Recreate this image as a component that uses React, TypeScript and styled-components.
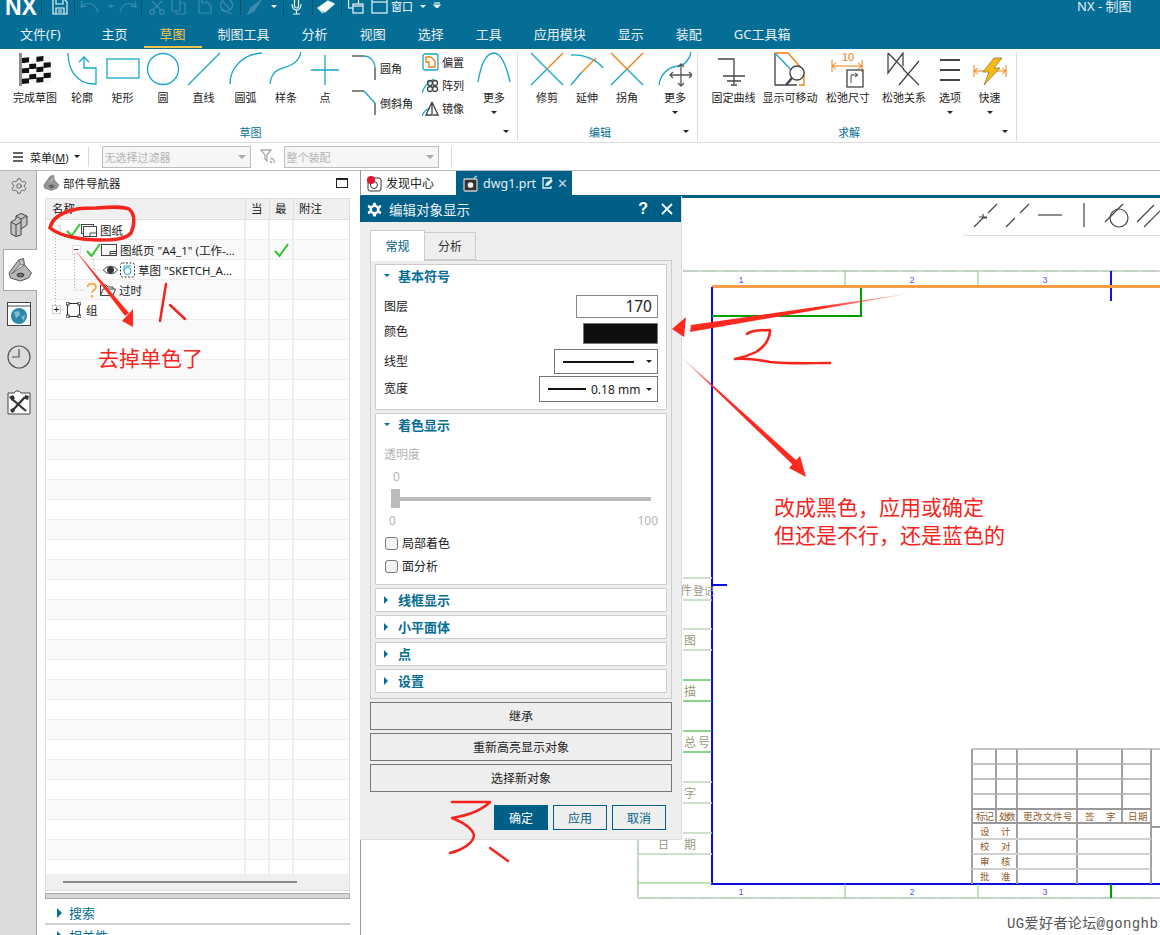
import React from "react";
import styled, { createGlobalStyle } from "styled-components";
import { Settings } from "lucide-react";

const FONT = `"Noto Sans", "Noto Sans CJK SC", sans-serif`;
const CY = "#16a6c9";
const OR = "#ee7d11";
const DK = "#444";

const Global = createGlobalStyle`
  html, body { margin: 0; padding: 0; background: #fff; }
  * { box-sizing: border-box; }
`;

const Root = styled.div`
  position: relative; width: 1160px; height: 935px; overflow: hidden;
  display: flex; flex-direction: column; font-family: ${FONT}; font-size: 12px; color: #222;
`;

/* ---------- header ---------- */
const Header = styled.header`
  height: 49px; background: #056e96; color: #eaf3f7; display: flex; flex-direction: column; flex: none;
`;
const QuickBar = styled.div`
  height: 22px; display: flex; align-items: flex-start; overflow: hidden; position: relative;
`;
const Logo = styled.div`
  font: bold 23px/15px "Liberation Sans", sans-serif; color: #fff; margin-left: 5px; width: 31px; height: 15px; letter-spacing: -0.2px;
`;
const QuickSep = styled.i<{ $ml: number }>`
  display: block; width: 1px; height: 15px; background: #03506f; margin-left: ${p => p.$ml}px; flex: none;
`;
const QuickIcon = styled.svg<{ $ml: number }>`
  display: block; flex: none; margin-left: ${p => p.$ml}px; fill: none; stroke: currentColor; stroke-width: 1.2;
`;
const QuickText = styled.span`
  font-size: 11px; line-height: 13px; margin-left: 2px; color: #fff;
`;
const Caret = styled.i<{ $dir?: "down" | "right"; $size?: number; $color?: string; $ml?: number }>`
  display: inline-block; flex: none; width: 0; height: 0; margin-left: ${p => p.$ml ?? 0}px;
  ${p => {
    const s = p.$size ?? 3; const c = p.$color ?? "#222";
    return p.$dir === "right"
      ? `border-top: ${s + 1}px solid transparent; border-bottom: ${s + 1}px solid transparent; border-left: ${s + 1}px solid ${c};`
      : `border-left: ${s}px solid transparent; border-right: ${s}px solid transparent; border-top: ${s}px solid ${c};`;
  }}
`;
const QuickCaret = styled(Caret)`margin-top: 5px;`;
const AppTitle = styled.div`
  position: absolute; left: 1077px; top: -2px; font-size: 13px; line-height: 16px; color: #e6f0f4; white-space: nowrap;
`;
const TabRow = styled.nav`
  height: 27px; display: flex; padding-left: 4px;
`;
const RibbonTab = styled.div<{ $active?: boolean; $ml?: number }>`
  padding: 0 16px; height: 26px; margin-left: ${p => p.$ml ?? 0}px; line-height: 24px; font-size: 13px;
  color: ${p => (p.$active ? "#f3c34f" : "#e8f1f5")};
  border-bottom: 2px solid ${p => (p.$active ? "#f3c34f" : "transparent")};
  white-space: nowrap;
`;

/* ---------- ribbon ---------- */
const Ribbon = styled.section`
  height: 94px; flex: none; display: flex; background: #fff; border-bottom: 1px solid #dcdcdc;
`;
const Group = styled.div<{ $w: number; $pl: number }>`
  width: ${p => p.$w}px; padding-left: ${p => p.$pl}px; height: 89px; margin-top: 3px; display: flex; flex-direction: column;
  border-right: 1px solid #dcdcdc;
`;
const Tools = styled.div`
  height: 71px; display: flex;
`;
const Tool = styled.div<{ $w: number; $ml?: number }>`
  width: ${p => p.$w}px; margin-left: ${p => p.$ml ?? 0}px; display: flex; flex-direction: column; align-items: center; flex: none;
`;
const ToolIcon = styled.svg`
  display: block; width: 34px; height: 36px; fill: none; stroke-width: 1.3; flex: none;
`;
const ToolLabel = styled.span`
  font-size: 11px; line-height: 14px; margin-top: 3px; white-space: nowrap; color: #222;
`;
const ToolCaret = styled(Caret)`margin-top: 6px;`;
const GroupFoot = styled.div`
  height: 17px; display: flex; align-items: center; padding-right: 8px;
`;
const GroupLabel = styled.span`
  flex: 1; text-align: center; font-size: 11px; color: #056e96; padding-right: 10px;
`;
const SmallCol = styled.div<{ $w: number; $gap: number; $pt: number; $ml?: number }>`
  width: ${p => p.$w}px; flex: none; display: flex; flex-direction: column; gap: ${p => p.$gap}px; padding-top: ${p => p.$pt}px; margin-left: ${p => p.$ml ?? 0}px;
`;
const SmallTool = styled.div`
  display: flex; align-items: center; white-space: nowrap; font-size: 11px; gap: 3px;
`;
const SmallIcon = styled.svg<{ $w: number; $h: number; $ml?: number }>`
  display: block; width: ${p => p.$w}px; height: ${p => p.$h}px; margin-left: ${p => p.$ml ?? 0}px; fill: none; stroke-width: 1.3; flex: none;
`;

/* ---------- selection bar ---------- */
const SelectBar = styled.div`
  height: 27px; flex: none; display: flex; align-items: center; background: #fff; padding-left: 13px;
`;
const MenuLabel = styled.span`
  font-size: 11px; margin-left: 7px; white-space: nowrap;
  u { text-underline-offset: 1px; }
`;
const BarSep = styled.i<{ $ml: number }>`
  width: 1px; height: 20px; background: #d8d8d8; margin-left: ${p => p.$ml}px; flex: none;
`;
const FilterBox = styled.div<{ $w: number; $ml: number }>`
  width: ${p => p.$w}px; margin-left: ${p => p.$ml}px; height: 22px; border: 1px solid #bdbdbd; background: #f6f6f6;
  color: #b4b4b4; font-size: 11px; display: flex; align-items: center; justify-content: space-between; padding: 0 4px 0 2px; flex: none;
`;

/* ---------- main ---------- */
const Main = styled.div`
  flex: 1; min-height: 0; display: flex;
`;
const Rail = styled.aside`
  width: 37px; flex: none; background: #dcdcdc; border-right: 1px solid #a8a8a8; border-top: 1px solid #bbb; display: flex; flex-direction: column;
`;
const RailItem = styled.div<{ $h: number; $active?: boolean }>`
  height: ${p => p.$h}px; display: flex; align-items: center; justify-content: center; padding-left: 2px; color: #555;
  ${p => p.$active ? "background: #fff; margin-left: 3px; margin-right: -1px; padding-left: 0; border: 1px solid #a8a8a8; border-right: none;" : ""}
`;
const Nav = styled.section`
  width: 323px; flex: none; background: #fff; border-top: 1px solid #bbb; display: flex; flex-direction: column; padding-left: 8px; padding-right: 10px;
`;
const NavTitle = styled.div`
  height: 27px; flex: none; display: flex; align-items: center; margin-left: -2px; padding-bottom: 4px; font-size: 11.5px; position: relative;
`;
const NavName = styled.span`margin-left: 3px; flex: 1;`;
const MaxBox = styled.i`
  display: block; width: 12px; height: 10px; border: 1px solid #222; border-top-width: 2px; margin-right: 2px;
`;
const Table = styled.div`
  height: 693px; flex: none; border: 1px solid #dedede; border-left-width: 1px; display: flex; flex-direction: column; overflow: hidden;
`;
const Cols = styled.div<{ $alt?: boolean }>`
  display: grid; grid-template-columns: 200px 24px 24px 1fr; flex: none;
  background: ${p => (p.$alt ? "#f9f9f9" : "#fff")};
`;
const HeadRow = styled(Cols)`
  height: 21px; background: #f0f0f0; border-bottom: 1px solid #dedede;
`;
const HeadCell = styled.div<{ $pl: number }>`
  border-right: 1px solid #dedede; padding-left: ${p => p.$pl}px; line-height: 20px; font-size: 11.5px; white-space: nowrap;
  &:last-child { border-right: none; }
`;
const TreeBody = styled.div`
  position: relative; height: 654px; overflow: hidden; flex: none;
`;
const TreeLines = styled.svg`
  position: absolute; left: 0; top: 0; width: 200px; height: 100px; fill: none; stroke: #aaa; stroke-width: 1; stroke-dasharray: 1 2;
`;
const Row = styled(Cols)`
  height: 20px; border-bottom: 1px solid #eee;
`;
const Cell = styled.div`
  border-right: 2px solid #eee; display: flex; align-items: center; justify-content: center;
  &:last-child { border-right: none; }
`;
const NameCell = styled.div<{ $pl?: number }>`
  border-right: 2px solid #eee; display: flex; align-items: center; padding-left: ${p => p.$pl ?? 0}px; white-space: nowrap; overflow: hidden; position: relative;
`;
const Exp = styled.i<{ $faint?: boolean }>`
  display: flex; align-items: center; justify-content: center; width: 9px; height: 9px; border: 1px solid ${p => p.$faint ? "#e2e2e2" : "#ccc"};
  font: normal 10px/7px "Liberation Sans", sans-serif; color: #111; background: #fff; flex: none; z-index: 1;
`;
const NodeIcon = styled.svg<{ $w: number; $ml?: number }>`
  display: block; width: ${p => p.$w}px; height: 16px; margin-left: ${p => p.$ml ?? 0}px; flex: none; fill: none; stroke: #333; stroke-width: 1;
`;
const NodeText = styled.span<{ $ml: number }>`
  margin-left: ${p => p.$ml}px; font-size: 11.5px; color: #222;
`;
const ScrollRow = styled.div`
  flex: 1; background: #efefef; display: flex; align-items: center; padding-left: 17px;
`;
const Thumb = styled.i`
  display: block; width: 234px; height: 2px; background: #888;
`;
const Splitter = styled.div`
  height: 6px; flex: none; margin-top: 2px; background: #d6d6d6; border: 1px solid #aaa;
`;
const Fold = styled.div<{ $h: number; $pt: number }>`
  height: ${p => p.$h}px; flex: none; display: flex; align-items: center; padding: ${p => p.$pt}px 0 0 12px; color: #056e96; font-size: 13px; gap: 7px;
  border-bottom: 2px solid #cfcfcf;
`;

/* ---------- graphics ---------- */
const Graphics = styled.section`
  flex: 1; min-width: 0; position: relative; border-left: 1px solid #999; display: flex; flex-direction: column;
`;
const DocTabs = styled.div`
  height: 25px; flex: none; display: flex; border-top: 1px solid #bbb; background: #fff;
`;
const DocTab = styled.div<{ $w: number; $active?: boolean }>`
  width: ${p => p.$w}px; display: flex; align-items: center; padding-left: 5px; gap: 4px; font-size: 12px;
  background: ${p => (p.$active ? "#005f87" : "#fff")}; color: ${p => (p.$active ? "#e8f0f4" : "#222")};
`;
const DocName = styled.span`font-size: 12.5px; margin-right: 2px;`;
const DocClose = styled.span`font-size: 13px; line-height: 14px; color: #c9d9e2;`;
const Canvas = styled.div`
  flex: 1; position: relative; background: #fff; border-top: 3px solid #005f87; overflow: hidden;
`;
const Sheet = styled.svg`
  position: absolute; left: 0; top: -3px; width: 800px; height: 740px; display: block;
`;
const ViewTools = styled.div`
  position: absolute; right: 0; top: 0; width: 197px; height: 38px; background: #fff; border-bottom: 1px solid #dcdcdc;
  display: flex; align-items: center; padding-left: 10px; gap: 7px;
`;
const ViewIcon = styled.svg<{ $ml?: number }>`
  display: block; width: 25px; height: 26px; fill: none; stroke: #444; stroke-width: 1.2; flex: none; margin: -4px 0 0 ${p => p.$ml ?? 0}px;
`;

/* ---------- dialog ---------- */
const Dialog = styled.div`
  position: absolute; left: -1px; top: 26px; width: 322px; height: 644px; background: #eee; border-bottom: 1px solid #ddd; border-right: 1px solid #ddd;
  display: flex; flex-direction: column; z-index: 2;
`;
const DlgTitle = styled.div`
  height: 26px; flex: none; background: #005f87; color: #eef4f7; display: flex; align-items: center; padding-left: 7px; font-size: 13.5px;
`;
const DlgName = styled.span`margin-left: 7px; flex: 1;`;
const DlgBtn = styled.span<{ $mr: number }>`
  font: bold 16px/20px "Liberation Sans", sans-serif; margin-right: ${p => p.$mr}px; color: #fff;
`;
const DlgClose = styled.svg`
  width: 12px; height: 12px; stroke: #fff; stroke-width: 1.8; margin-right: 8px; flex: none;
`;
const DlgTabs = styled.div`
  display: flex; align-items: flex-end; height: 30px; margin: 8px 0 0 10px; flex: none;
`;
const DlgTab = styled.div<{ $active?: boolean; $w: number }>`
  width: ${p => p.$w}px; height: ${p => (p.$active ? 31 : 28)}px; border: 1px solid #ccc; ${p => p.$active ? "border-bottom: none; color: #005f87; background: #fff; margin-bottom: -1px; z-index: 1;" : "color: #333; border-left: none;"}
  font-size: 12px; display: flex; align-items: center; justify-content: center;
`;
const TabPanel = styled.div`
  margin: 0 0 0 10px; width: 302px; height: 439px; border: 1px solid #ccc; background: #eee; padding: 3px 4px; display: flex; flex-direction: column; gap: 3px; flex: none;
`;
const Section = styled.div<{ $h: number }>`
  height: ${p => p.$h}px; flex: none; background: #fff; border: 1px solid #ccc; border-radius: 1px; display: flex; flex-direction: column; padding: 0 8px;
`;
const SecHead = styled.div`
  height: 23px; padding-bottom: 2px; flex: none; display: flex; align-items: center; font-size: 13px; font-weight: 700; color: #056e96;
`;
const SecCaret = styled.span`
  width: 14px; flex: none; display: flex; align-items: center;
`;
const Field = styled.div<{ $h: number; $mt: number }>`
  height: ${p => p.$h}px; margin-top: ${p => p.$mt}px; flex: none; display: flex; align-items: center; justify-content: space-between;
`;
const FieldLabel = styled.span<{ $up?: number }>`
  font-size: 12px; padding-bottom: ${p => p.$up ?? 2}px;
`;
const NumInput = styled.div`
  width: 82px; height: 23px; border: 1px solid #888; background: #fff; text-align: right; padding-right: 5px; font-size: 15.5px; line-height: 21px; color: #222;
`;
const Swatch = styled.div`
  width: 75px; height: 21px; background: #0e0e0e; border: 1px solid #777;
`;
const Combo = styled.div<{ $w: number; $h: number }>`
  width: ${p => p.$w}px; height: ${p => p.$h}px; border: 1px solid #777; background: #fff; display: flex; align-items: center; padding: 0 5px 0 5px; font-size: 12px; gap: 5px; white-space: nowrap;
`;
const LineSample = styled.i<{ $w: number }>`
  display: block; width: ${p => p.$w}px; height: 2px; background: #111; flex: none; margin-left: 3px;
`;
const ComboCaret = styled(Caret)`margin-left: auto;`;
const Muted = styled.div<{ $mt: number; $pl?: number }>`
  margin-top: ${p => p.$mt}px; padding-left: ${p => p.$pl ?? 0}px; height: 15px; line-height: 15px; font-size: 12px; color: #b5b5b5; flex: none;
`;
const Slider = styled.div`
  margin: 5px 0 0 7px; height: 19px; display: flex; align-items: center; flex: none;
`;
const SliderThumb = styled.i`display: block; width: 9px; height: 19px; background: #bbb; flex: none;`;
const SliderTrack = styled.i`display: block; width: 251px; height: 4px; background: #bbb; flex: none;`;
const Ends = styled.div`
  margin-top: 6px; height: 14px; line-height: 14px; display: flex; justify-content: space-between; color: #b5b5b5; font-size: 12px; padding-left: 5px; flex: none;
`;
const Check = styled.div<{ $mt: number }>`
  margin-top: ${p => p.$mt}px; height: 18px; padding-left: 1px; display: flex; align-items: center; gap: 4px; font-size: 12px; flex: none;
`;
const CheckBox = styled.i`
  display: block; width: 13px; height: 13px; border: 1px solid #777; border-radius: 3px; background: #f4f4f4;
`;
const WideBtn = styled.div`
  margin: 3px 0 0 10px; width: 302px; height: 28px; flex: none; border: 1px solid #777; background: #eee; display: flex; align-items: center; justify-content: center; font-size: 12px; color: #222;
`;
const DlgFoot = styled.div`
  margin-top: 13px; padding-right: 15px; display: flex; justify-content: flex-end; gap: 5px; flex: none;
`;
const FootBtn = styled.div<{ $primary?: boolean }>`
  width: 54px; height: 25px; border: 1px solid #005f87; display: flex; align-items: center; justify-content: center; font-size: 12px;
  background: ${p => (p.$primary ? "#005f87" : "#eee")}; color: ${p => (p.$primary ? "#fff" : "#005f87")};
`;

/* ---------- annotations ---------- */
const Overlay = styled.svg`
  position: absolute; left: 0; top: 0; width: 1160px; height: 935px; pointer-events: none; z-index: 5;
`;
const Note = styled.div<{ $x: number; $y: number; $size: number }>`
  position: absolute; left: ${p => p.$x}px; top: ${p => p.$y}px; font-size: ${p => p.$size}px; line-height: 28px; color: #f5241c; white-space: nowrap; z-index: 6;
`;

/* ---------- icons ---------- */
const Flag = () => (
  <ToolIcon viewBox="0 0 34 36">
    <rect x="1" y="1" width="3" height="33" fill="#8d8d8d" />
    <g transform="translate(4 4) skewY(-5)">
      {[0, 1, 2, 3, 4].map(r => [0, 1, 2, 3].map(c => (
        <rect key={`${r}-${c}`} x={c * 7.2} y={r * 5.2 + (c % 2 ? 1.5 : 0) + 2} width="7.2" height="5.2" fill={(r + c) % 2 ? "#f7f7f7" : "#111"} />
      )))}
    </g>
  </ToolIcon>
);
const Stroke = ({ d, c = CY, w = 1.3 }: { d: string; c?: string; w?: number }) => <path d={d} stroke={c} strokeWidth={w} fill="none" />;

const Mini = ({ children, w, h }: { children: React.ReactNode; w: number; h: number }) => (
  <SmallIcon $w={w} $h={h} viewBox={`0 0 ${w} ${h}`}>{children}</SmallIcon>
);

const tool = (children: React.ReactNode) => <ToolIcon viewBox="0 0 34 36">{children}</ToolIcon>;

const CheckMark = ({ ml = 0 }: { ml?: number }) => (
  <NodeIcon $w={15} $ml={ml} viewBox="0 0 15 16"><path d="M1 9 L5.5 14 L14 2" stroke="#2fc42f" strokeWidth="2" /></NodeIcon>
);
const SheetIcon = ({ ml = 0 }: { ml?: number }) => (
  <NodeIcon $w={16} viewBox="0 0 16 16" $ml={ml}><rect x="0.5" y="2.5" width="15" height="11" stroke="#444" /><path d="M9 13.5 V9.5 H15.5 M9 11.5 H15.5" stroke="#444" /></NodeIcon>
);
const PartIcon = ({ w, h, face, edge }: { w: number; h: number; face: string; edge: string }) => (
  <svg width={w} height={h} viewBox="0 0 24 24">
    <path d="M0.500 15 L10 2 L15 0.500 L16 7 L23 15 L20 20 L12 23 L2 20 Z" fill={face} stroke={edge} />
    <path d="M10 2 L12 6 L16 7 M12 6 L3 16 L7 13 L16 7" fill="#dcdcdc" stroke={edge} strokeWidth="0.8" />
    <ellipse cx="12" cy="17" rx="3.500" ry="1.800" fill="#777" stroke="#333" />
  </svg>
);

const names = ["文件(F)"];
const tabs = ["制图工具", "分析", "视图", "选择", "工具", "应用模块", "显示", "装配", "GC工具箱"];

const hy = [749, 764, 779, 794];
const lowY = [839, 854, 869];

export default function App() {
  return (
    <Root>
      <Global />
      <Header>
        <QuickBar>
          <Logo>NX</Logo>
          <QuickSep $ml={5} />
          <QuickIcon $ml={10} width="16" height="15" viewBox="0 0 16 15"><path d="M1 -1 H12 L15 2 V14 H1 Z M4 -1 V4 H11 V-1 M4 14 V8 H12 V14 M6 10 H10 M6 12 H10" /></QuickIcon>
          <QuickSep $ml={6} />
          <QuickIcon $ml={5} width="19" height="15" viewBox="0 0 19 15" color="#3b8cad"><path d="M2 1 L1 7 L7 6 M1 7 C6 1 15 2 18 12" /></QuickIcon>
          <QuickCaret $ml={9} $color="#3b8cad" />
          <QuickIcon $ml={5} width="18" height="15" viewBox="0 0 19 15" color="#3b8cad"><path d="M17 1 L18 7 L12 6 M18 7 C13 1 4 2 1 12" /></QuickIcon>
          <QuickSep $ml={4} />
          <QuickIcon $ml={6} width="18" height="15" viewBox="0 0 18 15" color="#3b8cad"><path d="M4 1 L13 10 M14 1 L5 10" /><circle cx="4" cy="12" r="2.3" /><circle cx="14" cy="12" r="2.3" /></QuickIcon>
          <QuickIcon $ml={5} width="15" height="15" viewBox="0 0 15 15" color="#3b8cad"><path d="M1 -1 H9 V11 H1 Z M9 3 H14 V14 H5 V11" /></QuickIcon>
          <QuickIcon $ml={12} width="14" height="15" viewBox="0 0 14 15" color="#3b8cad"><path d="M1 0 V13 H13 V6 L8 1 M4 0 V3 H8" /></QuickIcon>
          <QuickIcon $ml={7} width="15" height="15" viewBox="0 0 15 15" color="#3b8cad"><circle cx="7.5" cy="5" r="6" /><path d="M2 10 L13 14 M4 2 L11 9" /></QuickIcon>
          <QuickSep $ml={6} />
          <QuickIcon $ml={6} width="17" height="15" viewBox="0 0 17 15" color="#3b8cad"><path d="M1 14 L4 8 L14 0 L7 11 Z" fill="#3b8cad" /></QuickIcon>
          <QuickCaret $ml={7} $color="#fff" />
          <QuickSep $ml={6} />
          <QuickIcon $ml={7} width="11" height="15" viewBox="0 0 11 15"><rect x="3.5" y="-2" width="4" height="10" rx="2" /><path d="M1 4 C1 12 10 12 10 4 M5.5 10 V14 M2 14 H9" /></QuickIcon>
          <QuickSep $ml={10} />
          <QuickIcon $ml={4} width="18" height="15" viewBox="0 0 18 15"><path d="M1 8 L11 1 L17 4 L8 12 Z" fill="#fff" /><path d="M1 8 L6 13" /></QuickIcon>
          <QuickSep $ml={6} />
          <QuickIcon $ml={6} width="16" height="15" viewBox="0 0 16 15"><rect x="0.5" y="-1" width="10" height="9" /><rect x="5" y="4" width="10" height="9" fill="#056e96" /><path d="M5 6 H15" /></QuickIcon>
          <QuickIcon $ml={7} width="18" height="15" viewBox="0 0 18 15"><rect x="1" y="-2" width="15" height="15" /><path d="M1 2 H16" /></QuickIcon>
          <QuickText>窗口</QuickText>
          <QuickCaret $ml={7} $color="#fff" />
          <QuickIcon $ml={7} width="8" height="8" viewBox="0 0 8 8"><path d="M1 3 H7" /><path d="M1 5 H7 L4 8 Z" fill="#fff" /></QuickIcon>
          <AppTitle>NX - 制图</AppTitle>
        </QuickBar>
        <TabRow>
          <RibbonTab>{names[0]}</RibbonTab>
          <RibbonTab $ml={9}>主页</RibbonTab>
          <RibbonTab $active>草图</RibbonTab>
          {tabs.map(t => <RibbonTab key={t}>{t}</RibbonTab>)}
        </TabRow>
      </Header>

      <Ribbon>
        <Group $w={518} $pl={8}>
          <Tools>
            <Tool $w={54}><Flag /><ToolLabel>完成草图</ToolLabel></Tool>
            <Tool $w={40}>{tool(<><Stroke d="M3 1 C3 18 12 32 29 32 H31 V16 H19 V5" /><Stroke d="M14 10 L19 5 L24 10" /></>)}<ToolLabel>轮廓</ToolLabel></Tool>
            <Tool $w={41}>{tool(<rect x="1" y="7" width="32" height="19" stroke={CY} />)}<ToolLabel>矩形</ToolLabel></Tool>
            <Tool $w={40}>{tool(<circle cx="17" cy="17" r="15.5" stroke={CY} />)}<ToolLabel>圆</ToolLabel></Tool>
            <Tool $w={41}>{tool(<Stroke d="M1 33 L33 1" />)}<ToolLabel>直线</ToolLabel></Tool>
            <Tool $w={43}>{tool(<Stroke d="M1 32 C1 15 15 2 33 1" />)}<ToolLabel>圆弧</ToolLabel></Tool>
            <Tool $w={38}>{tool(<Stroke d="M1 32 C3 15 15 17 22 13 C28 10 31 6 32 0" />)}<ToolLabel>样条</ToolLabel></Tool>
            <Tool $w={40}>{tool(<Stroke d="M17 3 V33 M3 18 H31" />)}<ToolLabel>点</ToolLabel></Tool>
            <SmallCol $w={70} $gap={9} $pt={3} $ml={7}>
              <SmallTool><Mini w={25} h={26}><Stroke d="M0 1 H12" c={DK} /><Stroke d="M12 1 C18 1 23 6 23 13" /><Stroke d="M23 13 V25" c={DK} /></Mini>圆角</SmallTool>
              <SmallTool><Mini w={25} h={26}><Stroke d="M0 1 H12" c={DK} /><Stroke d="M12 1 L23 13" /><Stroke d="M23 13 V25" c={DK} /></Mini>倒斜角</SmallTool>
            </SmallCol>
            <SmallCol $w={53} $gap={5} $pt={1}>
              <SmallTool>
                <Mini w={17} h={18}><rect x="1" y="1" width="15" height="16" rx="2" stroke={CY} /><Stroke d="M4 4 H9 L13 8 V14 H7 V9 H4 Z" c={OR} /></Mini>偏置
              </SmallTool>
              <SmallTool>
                <Mini w={17} h={18}><Stroke d="M0 17 C2 10 6 6 12 3" /><circle cx="8" cy="7" r="2.5" stroke={DK} /><circle cx="13" cy="7" r="2.5" stroke={DK} /><circle cx="8" cy="13" r="2.5" stroke={DK} /><circle cx="13" cy="13" r="2.5" stroke={DK} /></Mini>阵列
              </SmallTool>
              <SmallTool>
                <Mini w={17} h={18}><Stroke d="M0 17 C2 12 5 10 8 9" /><Stroke d="M10 3 L4 16 H10 Z M10 3 L16 16 H11" c={DK} /></Mini>镜像
              </SmallTool>
            </SmallCol>
            <Tool $w={38}>{tool(<Stroke d="M1 30 C5 6 12 1 17 1 C22 1 28 8 33 30" />)}<ToolLabel>更多</ToolLabel><ToolCaret /></Tool>
          </Tools>
          <GroupFoot><GroupLabel>草图</GroupLabel><Caret /></GroupFoot>
        </Group>

        <Group $w={180} $pl={9}>
          <Tools>
            <Tool $w={40}>{tool(<><Stroke d="M1 1 L33 33 M1 33 L17 17" /><Stroke d="M17 17 L33 1" c={OR} /></>)}<ToolLabel>修剪</ToolLabel></Tool>
            <Tool $w={40}>{tool(<><Stroke d="M1 3 C14 2 27 8 33 16" /><Stroke d="M1 33 L12 20" /><Stroke d="M12 20 L26 6" c={OR} /></>)}<ToolLabel>延伸</ToolLabel></Tool>
            <Tool $w={40}>{tool(<><Stroke d="M1 33 L17 17 L33 33" /><Stroke d="M1 1 L17 17 L33 1" c={OR} /></>)}<ToolLabel>拐角</ToolLabel></Tool>
            <Tool $w={40} $ml={8}>
              {tool(<><Stroke d="M1 33 C3 18 15 14 22 14 C28 12 32 6 33 0" /><Stroke d="M23 12 V34 M12 23 H34 M20 15 L23 12 L26 15 M20 31 L23 34 L26 31 M15 20 L12 23 L15 26 M31 20 L34 23 L31 26" c="#555" /></>)}
              <ToolLabel>更多</ToolLabel><ToolCaret />
            </Tool>
          </Tools>
          <GroupFoot><GroupLabel>编辑</GroupLabel><Caret /></GroupFoot>
        </Group>

        <Group $w={319} $pl={8}>
          <Tools>
            <Tool $w={55}>{tool(<Stroke d="M1 7 H17 V32 M6 24 H28 M10 29 H24 M14 33 H20" c={DK} />)}<ToolLabel>固定曲线</ToolLabel></Tool>
            <Tool $w={58}>{tool(<><Stroke d="M2 1 V33 H24" c={DK} /><Stroke d="M2 1 L21 21" /><Stroke d="M2 1 H15 L31 19 V33 H26" c={OR} /><circle cx="24" cy="21" r="7" stroke={DK} fill="#fff" /><Stroke d="M19 26 L13 33" c={DK} w={2.4} /></>)}<ToolLabel>显示可移动</ToolLabel></Tool>
            <Tool $w={58}>{tool(<>
              <text x="17" y="9" fontSize="11" textAnchor="middle" fill={OR} stroke="none" fontFamily="Liberation Sans">10</text>
              <Stroke d="M1 8 V20 M31 8 V20 M1 14 H31 M5 11 L1 14 L5 17 M27 11 L31 14 L27 17" c={OR} w={1} />
              <rect x="16" y="18" width="16" height="17" stroke={DK} /><Stroke d="M20 31 V23 M20 23 L26 23 M24 21 L27 23 L24 25" c={DK} w={1} />
            </>)}<ToolLabel>松弛尺寸</ToolLabel></Tool>
            <Tool $w={54}>{tool(<Stroke d="M1 1 V21 L16 1 V14 M1 1 L17 17 M32 9 L12 33 M16 17 L32 33" c={DK} />)}<ToolLabel>松弛关系</ToolLabel></Tool>
            <Tool $w={38}>{tool(<Stroke d="M7 8 H27 M7 18 H27 M7 28 H27" c={DK} w={2.2} />)}<ToolLabel>选项</ToolLabel><ToolCaret /></Tool>
            <Tool $w={41}>{tool(<>
              <Stroke d="M1 13 V25 M33 13 V25 M1 19 H33 M5 16 L1 19 L5 22 M29 16 L33 19 L29 22" c={OR} w={1} />
              <path d="M21 6 H29 L21 16 H27 L11 33 L16 20 H10 Z" fill="#f6b90f" stroke="#8a7a40" strokeWidth="0.8" />
            </>)}<ToolLabel>快速</ToolLabel><ToolCaret /></Tool>
          </Tools>
          <GroupFoot><GroupLabel>求解</GroupLabel><Caret /></GroupFoot>
        </Group>
      </Ribbon>

      <SelectBar>
        <SmallIcon $w={10} $h={10} viewBox="0 0 10 10"><path d="M0 1 H10 M0 5 H10 M0 9 H10" stroke="#333" /></SmallIcon>
        <MenuLabel>菜单(<u>M</u>)</MenuLabel>
        <Caret $ml={5} />
        <BarSep $ml={8} />
        <FilterBox $w={149} $ml={13}>无选择过滤器<Caret $size={4} $color="#aaa" /></FilterBox>
        <SmallIcon $w={16} $h={16} $ml={9} viewBox="0 0 16 16"><path d="M1 1 H11 L7 6 V12 L5 10 V6 Z M10 10 C13 9 15 11 14 14 M12 14 L10 12" stroke="#aaa" /></SmallIcon>
        <FilterBox $w={155} $ml={8}>整个装配<Caret $size={4} $color="#aaa" /></FilterBox>
        <BarSep $ml={12} />
      </SelectBar>

      <Main>
        <Rail>
          <RailItem $h={30}><Settings size={18} strokeWidth={1.2} /></RailItem>
          <RailItem $h={48}>
            <svg width="18" height="24" viewBox="0 0 18 24">
              <path d="M6 3 L11 0.500 L17 3 V12 L11 16 V22 L6 23.500 L1 21 V9 L6 6 Z" fill="#c4c4c4" stroke="#444" />
              <path d="M6 3 L11 6 L17 3 M11 6 V16 M1 9 L6 12 L11 9 M6 12 V23" fill="none" stroke="#444" />
            </svg>
          </RailItem>
          <RailItem $h={42} $active><PartIcon w={25} h={24} face="#b8b8b8" edge="#555" /></RailItem>
          <RailItem $h={46}>
            <svg width="24" height="24" viewBox="0 0 24 24"><rect x="0.5" y="0.5" width="23" height="23" fill="#fff" stroke="#444" /><path d="M1 4 H23" stroke="#444" /><circle cx="12" cy="14" r="8" fill="#2a89ab" /><path d="M7 10 L12 9 L13 13 L9 16 Z M14 15 L18 13 L17 19 Z" fill="#87bccf" /></svg>
          </RailItem>
          <RailItem $h={40}>
            <svg width="24" height="24" viewBox="0 0 24 24" fill="none" stroke="#555" strokeWidth="1.2"><circle cx="12" cy="12" r="11" /><path d="M12 4 V12 H5" /></svg>
          </RailItem>
          <RailItem $h={50}>
            <svg width="24" height="25" viewBox="0 0 24 25"><path d="M1 3 H7 L9 1 H12 L14 3 H23 V24 H1 Z" fill="#fff" stroke="#444" /><path d="M5 9 L19 21 M18 7 L6 20" stroke="#333" strokeWidth="2.2" /><path d="M2 7 L6 5 L8 8 L5 11 Z M18 5 L22 6 L21 10 L18 9 Z M3 20 L6 18 L8 21 L5 23 Z" fill="#333" /></svg>
          </RailItem>
        </Rail>

        <Nav>
          <NavTitle>
            <PartIcon w={17} h={16} face="#999" edge="#666" />
            <NavName>部件导航器</NavName>
            <MaxBox />
          </NavTitle>
          <Table>
            <HeadRow>
              <HeadCell $pl={6}>名称</HeadCell><HeadCell $pl={5}>当</HeadCell><HeadCell $pl={5}>最</HeadCell><HeadCell $pl={5}>附注</HeadCell>
            </HeadRow>
            <TreeBody>
              <Row>
                <NameCell $pl={6}><Exp $faint /><CheckMark ml={5} /><NodeIcon $w={16} viewBox="0 0 16 16"><rect x="0.5" y="2.5" width="12" height="9" stroke="#444" /><rect x="2.5" y="4.5" width="13" height="10" fill="#fff" stroke="#444" /><path d="M9 14 V11 H15" stroke="#444" /></NodeIcon><NodeText $ml={3}>图纸</NodeText></NameCell>
                <Cell /><Cell /><Cell />
              </Row>
              <Row $alt>
                <NameCell $pl={26}><Exp $faint>−</Exp><CheckMark ml={5} /><SheetIcon /><NodeText $ml={3}>图纸页 "A4_1" (工作-...</NodeText></NameCell>
                <Cell /><Cell><CheckMark /></Cell><Cell />
              </Row>
              <Row>
                <NameCell $pl={57}>
                  <NodeIcon $w={15} viewBox="0 0 15 16"><path d="M0.5 8 C4 3 11 3 14.5 8 C11 13 4 13 0.5 8 Z" /><circle cx="7.5" cy="8" r="3" fill="#333" /></NodeIcon>
                  <NodeIcon $w={15} $ml={2} viewBox="0 0 15 16"><rect x="0.5" y="1" width="14" height="14" rx="2" strokeDasharray="2 1.5" stroke="#333" /><circle cx="7.5" cy="9" r="3.5" stroke={CY} /><path d="M4 9 L4 4 H11" stroke={CY} /></NodeIcon>
                  <NodeText $ml={3}>草图 "SKETCH_A...</NodeText>
                </NameCell>
                <Cell /><Cell /><Cell />
              </Row>
              <Row $alt>
                <NameCell $pl={40}>
                  <NodeIcon $w={12} viewBox="0 0 12 16"><path d="M1.5 5 C2 0.5 10 0.5 10 5 C10 8 6 8 6 11" stroke="#f5a94a" strokeWidth="1.7" /><circle cx="6" cy="14.3" r="1.2" fill="#f5a94a" stroke="none" /></NodeIcon>
                  <NodeIcon $w={16} $ml={2} viewBox="0 0 16 16"><path d="M0.5 13.5 V3 H6 L8 5 H13 V7 M0.5 13.5 L3 7 H15.5 L13 13.5 Z" stroke="#444" /></NodeIcon>
                  <NodeText $ml={3}>过时</NodeText>
                </NameCell>
                <Cell /><Cell /><Cell />
              </Row>
              <Row>
                <NameCell $pl={6}>
                  <Exp>+</Exp>
                  <NodeIcon $w={15} $ml={5} viewBox="0 0 15 16"><rect x="1.5" y="1.5" width="12" height="13" stroke="#333" /><rect x="0" y="0" width="3" height="3" fill="#fff" stroke="#333" /><rect x="12" y="0" width="3" height="3" fill="#fff" stroke="#333" /><rect x="0" y="13" width="3" height="3" fill="#fff" stroke="#333" /><rect x="12" y="13" width="3" height="3" fill="#fff" stroke="#333" /></NodeIcon>
                  <NodeText $ml={5}>组</NodeText>
                </NameCell>
                <Cell /><Cell /><Cell />
              </Row>
              {Array.from({ length: 28 }, (_, i) => (
                <Row key={i} $alt={i % 2 === 0}><NameCell /><Cell /><Cell /><Cell /></Row>
              ))}
              <TreeLines viewBox="0 0 200 100">
                <path d="M9.5 15 V90 H6 M28.5 25 V70 H40 M47.5 39 V50 H57" />
              </TreeLines>
            </TreeBody>
            <ScrollRow><Thumb /></ScrollRow>
          </Table>
          <Splitter />
          <Fold $h={26} $pt={3}><Caret $dir="right" $size={4} $color="#056e96" />搜索</Fold>
          <Fold $h={20} $pt={3}><Caret $dir="right" $size={4} $color="#056e96" />相关性</Fold>
        </Nav>

        <Graphics>
          <DocTabs>
            <DocTab $w={95}>
              <svg width="16" height="17" viewBox="0 0 16 17" fill="none"><rect x="2" y="3" width="13" height="13" rx="2" stroke="#333" /><circle cx="8" cy="10" r="3.5" stroke="#333" /><circle cx="5" cy="5" r="4" fill="#e3152b" /></svg>
              发现中心
            </DocTab>
            <DocTab $w={116} $active>
              <SmallIcon $w={16} $h={17} $ml={2} viewBox="0 0 16 17"><rect x="1" y="4" width="13" height="12" rx="1" fill="#333" stroke="#ccc" /><circle cx="7.5" cy="10" r="3.5" fill="#eee" stroke="#333" /><path d="M11 3 L14 1" stroke="#ccc" strokeWidth="1.5" /></SmallIcon>
              <DocName>dwg1.prt</DocName>
              <svg width="11" height="12" viewBox="0 0 11 12" fill="none" stroke="#e8f0f4" strokeWidth="1.3"><path d="M9 5 V1 H1 V11 H9 V9" /><path d="M4 8 L5 6 L9 3 L10 4 L6 8 Z" fill="#e8f0f4" /></svg>
              <DocClose>✕</DocClose>
            </DocTab>
          </DocTabs>
          <Canvas>
            <Sheet viewBox="360 195 800 740" fill="none">
              <path d="M682 271 H1160" stroke="#aaa" />
              <path d="M682 271 H1160" stroke="#7ccb7c" strokeOpacity="0.45" strokeDasharray="14 6" />
              <path d="M844 271 V286 M977 271 V286" stroke="#7ccb7c" />
              <path d="M1110 271 V301" stroke="#1414f0" strokeWidth="2" />
              <path d="M711 286.5 H1160" stroke="#ff9d47" strokeWidth="3" />
              <path d="M711 287 V884 H1160 M711 585 H726" stroke="#0b0be6" strokeWidth="2" />
              <path d="M711 316 H860 V288" stroke="#009f00" strokeWidth="2" />
              {[[740, "1"], [911, "2"], [1044, "3"]].map(([x, t]) => (
                <React.Fragment key={String(t)}>
                  <text x={Number(x)} y={283} fontSize="9" fill="#5555ee" textAnchor="middle" fontFamily="Liberation Sans">{t}</text>
                  <text x={Number(x)} y={895} fontSize="9" fill="#5555ee" textAnchor="middle" fontFamily="Liberation Sans">{t}</text>
                </React.Fragment>
              ))}
              <path d="M637 840 V898 H1160" stroke="#aaa" />
              <path d="M637 840 V898 H1160" stroke="#7ccb7c" strokeOpacity="0.45" strokeDasharray="14 6" />
              <path d="M844 884 V898 M977 884 V898" stroke="#7ccb7c" />
              <path d="M1110 884 V898" stroke="#00a000" strokeWidth="2" />
              <path d="M682 600 H711 M682 629 H711 M682 650 H711 M682 782 H711 M682 803 H711 M682 578 H711 M682 854 H711 M637 854 H682 M682 833 H711" stroke="#bcd8bc" strokeWidth="1.5" />
              <path d="M682 680 H711 M682 701 H711 M682 731 H711 M682 752 H711" stroke="#19a819" strokeWidth="1" />
              <path d="M637 883 H711" stroke="#7ccb7c" />
              <g fill="#9a9a80" fontSize="12" fontFamily='"Noto Sans CJK SC"'>
                <text x="679" y="595">件</text><text x="692" y="595" fontSize="11">登</text><text x="703" y="595" fontSize="10">记</text>
                <text x="683" y="645">图</text>
                <text x="683" y="696">描</text>
                <text x="683" y="747">总</text><text x="697" y="747">号</text>
                <text x="683" y="798">字</text>
                <text x="657" y="849" fontSize="11">日</text><text x="683" y="849">期</text>
              </g>
              <path d="M971 749 V884 M1016 749 V884 M1076 749 V884 M1150 749 V884 M995 749 V823 M1121 749 V823" stroke="#a0a0a0" strokeWidth="2" />
              <path d={hy.map(y => `M971 ${y} H1150`).join(" ")} stroke="#b0b0b0" strokeWidth="1.4" />
              <path d={lowY.map(y => `M971 ${y} H1150`).join(" ")} stroke="#cfcfcf" strokeWidth="2" />
              <path d="M971 809 H1150 M971 823 H1150 M1150 827 H1160" stroke="#999" strokeWidth="1.8" />
              <path d="M1150 749 H1160" stroke="#a3a3a3" strokeWidth="1.2" />
              <g fill="#8f5c2c" fontSize="9.5" fontFamily='"Noto Sans CJK SC"'>
                <text x="975" y="820" letterSpacing="-1">标记</text><text x="998" y="820" letterSpacing="-2.500">处数</text>
                <text x="1022" y="820" letterSpacing="0.5">更改文件号</text>
                <text x="1084" y="820">签</text><text x="1105" y="820">字</text>
                <text x="1127" y="820">日</text><text x="1137" y="820">期</text>
                {[["设", "计", 835], ["校", "对", 850], ["审", "核", 865], ["批", "准", 880]].map(([a, b, y]) => (
                  <React.Fragment key={String(a)}>
                    <text x="979" y={Number(y)}>{a}</text><text x="1000" y={Number(y)}>{b}</text>
                  </React.Fragment>
                ))}
              </g>
              <text x="1006" y="928" fontSize="14" fill="#555" letterSpacing="0.4" fontFamily='"Liberation Mono", "Noto Sans CJK SC", monospace'>UG爱好者论坛@gonghb</text>
            </Sheet>
            <ViewTools>
              <ViewIcon viewBox="0 0 25 26"><path d="M1 25 L10 16 M15 11 L24 2 M14 16 L10 16 L10 12 M6 15 L14 15" /></ViewIcon>
              <ViewIcon viewBox="0 0 25 26"><path d="M1 25 L10 16 M15 11 L24 2" /></ViewIcon>
              <ViewIcon viewBox="0 0 25 26"><path d="M1 13 H25" /></ViewIcon>
              <ViewIcon viewBox="0 0 25 26" $ml={3}><path d="M12 1 V25" /></ViewIcon>
              <ViewIcon viewBox="0 0 25 26"><circle cx="15" cy="16" r="9" /><path d="M1 20 L19 2" /></ViewIcon>
              <ViewIcon viewBox="0 0 25 26"><path d="M1 20 L18 3 M8 25 L25 8" /></ViewIcon>
            </ViewTools>
          </Canvas>

          <Dialog>
            <DlgTitle>
              <svg width="15" height="15" viewBox="0 0 24 24" fill="#fff"><path fillRule="evenodd" d="M10 1 H14 L15 5 L18 6.5 L21.5 4.5 L23 8 L20 10.5 V13.5 L23 16 L21.5 19.5 L18 17.5 L15 19 L14 23 H10 L9 19 L6 17.5 L2.500 19.500 L1 16 L4 13.5 V10.5 L1 8 L2.500 4.500 L6 6.5 L9 5 Z M12 8 A4 4 0 1 0 12 16 A4 4 0 1 0 12 8 Z" /></svg>
              <DlgName>编辑对象显示</DlgName>
              <DlgBtn $mr={13}>?</DlgBtn>
              <DlgClose viewBox="0 0 12 12"><path d="M1 1 L11 11 M11 1 L1 11" /></DlgClose>
            </DlgTitle>
            <DlgTabs>
              <DlgTab $w={55} $active>常规</DlgTab>
              <DlgTab $w={51}>分析</DlgTab>
            </DlgTabs>
            <TabPanel>
              <Section $h={146}>
                <SecHead><SecCaret><Caret $size={3.5} $color="#056e96" /></SecCaret>基本符号</SecHead>
                <Field $h={23} $mt={7}><FieldLabel>图层</FieldLabel><NumInput>170</NumInput></Field>
                <Field $h={21} $mt={5}><FieldLabel $up={6}>颜色</FieldLabel><Swatch /></Field>
                <Field $h={25} $mt={5}><FieldLabel>线型</FieldLabel><Combo $w={104} $h={25}><LineSample $w={71} /><ComboCaret $size={3.5} /></Combo></Field>
                <Field $h={26} $mt={2}><FieldLabel>宽度</FieldLabel><Combo $w={119} $h={26}><LineSample $w={38} />0.18 mm<ComboCaret $size={3.5} /></Combo></Field>
              </Section>
              <Section $h={172}>
                <SecHead><SecCaret><Caret $size={3.5} $color="#056e96" /></SecCaret>着色显示</SecHead>
                <Muted $mt={10}>透明度</Muted>
                <Muted $mt={7} $pl={9}>0</Muted>
                <Slider><SliderThumb /><SliderTrack /></Slider>
                <Ends><span>0</span><span>100</span></Ends>
                <Check $mt={6}><CheckBox />局部着色</Check>
                <Check $mt={5}><CheckBox />面分析</Check>
              </Section>
              {["线框显示", "小平面体", "点", "设置"].map(t => (
                <Section $h={24} key={t}>
                  <SecHead><SecCaret><Caret $dir="right" $size={3} $color="#056e96" /></SecCaret>{t}</SecHead>
                </Section>
              ))}
            </TabPanel>
            <WideBtn>继承</WideBtn>
            <WideBtn>重新高亮显示对象</WideBtn>
            <WideBtn>选择新对象</WideBtn>
            <DlgFoot>
              <FootBtn $primary>确定</FootBtn>
              <FootBtn>应用</FootBtn>
              <FootBtn>取消</FootBtn>
            </DlgFoot>
          </Dialog>
        </Graphics>
      </Main>

      <Overlay viewBox="0 0 1160 935" fill="none">
        <defs>
          <linearGradient id="fadeA" x1="913" y1="293" x2="680" y2="330" gradientUnits="userSpaceOnUse">
            <stop offset="0" stopColor="#ff2a1f" stopOpacity="0.1" />
            <stop offset="0.4" stopColor="#ff2a1f" />
          </linearGradient>
          <linearGradient id="fadeB" x1="677" y1="353" x2="800" y2="470" gradientUnits="userSpaceOnUse">
            <stop offset="0" stopColor="#ff2a1f" stopOpacity="0.2" />
            <stop offset="0.3" stopColor="#ff2a1f" />
          </linearGradient>
        </defs>
        <path d="M96 208 C110 207 122 206 129 209 C135 214 135 224 131 233 C125 240 110 240 100 240 C80 240 60 236 50 228 C52 218 62 212 77 209 C84 208 90 208 96 208" stroke="#f5241c" strokeWidth="3.500" strokeLinecap="round" />
        <g stroke="#f5241c" strokeWidth="2.5" strokeLinecap="round" strokeLinejoin="round">
          <path d="M166 284 L160 321 M170 305 L185 319" />
          <path d="M747 334 C750 331 760 330 770 330 C770 340 763 348 756 352 C748 356 740 358 735 359 C745 358 755 359 770 362 C790 364 810 363 830 363" />
          <path d="M452 802 H490 C482 810 470 815 452 818 C462 822 472 828 474 835 C474 843 462 850 450 853" />
          <path d="M490 848 L508 861" />
        </g>
        <path d="M75 250 L129 313 L125 316 Z" fill="#ff2a1f" />
        <path d="M133 327 L122 321 L133 309 Z" fill="#ff2a1f" />
        <path d="M913 293 L691 325 L690 332 Z" fill="url(#fadeA)" />
        <path d="M672 329 L686 317 L684 337 Z" fill="#ff2a1f" />
        <path d="M677 353 L797 461 L793 465 Z" fill="url(#fadeB)" />
        <path d="M806 477 L789 468 L800 456 Z" fill="#ff2a1f" />
      </Overlay>
      <Note $x={98} $y={344} $size={21}>去掉单色了</Note>
      <Note $x={774} $y={493} $size={21}>改成黑色，应用或确定<br />但还是不行，还是蓝色的</Note>
    </Root>
  );
}
